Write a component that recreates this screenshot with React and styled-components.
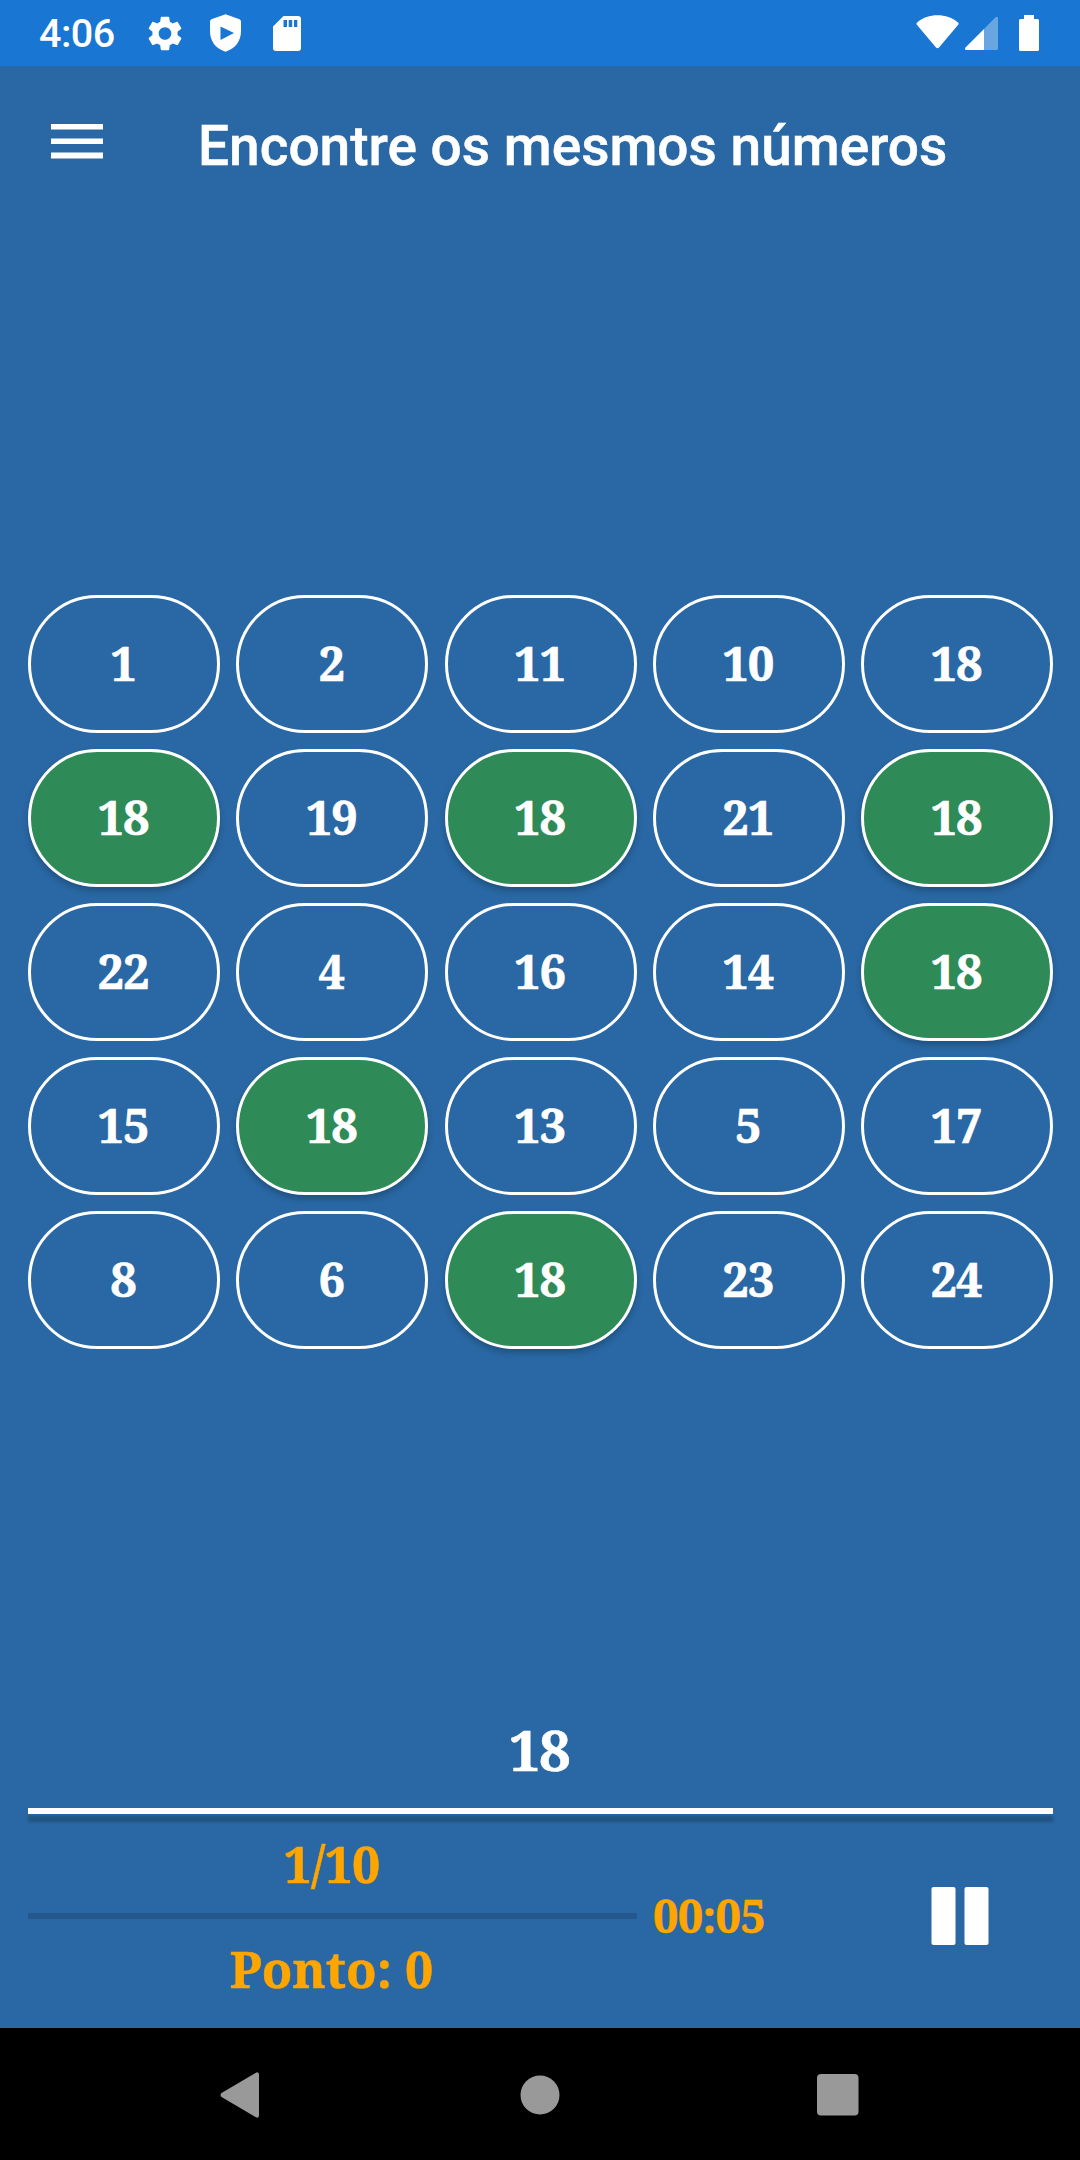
import React, { useState } from 'react'
import styled, { createGlobalStyle } from 'styled-components';

const GlobalStyle = createGlobalStyle`
  * {
    box-sizing: border-box;
  }

  body {
    margin: 0;
    background: #2968a4;
  }

  button {
    margin: 0;
    padding: 0;
    border: none;
    background: none;
    cursor: pointer;
  }

  svg {
    display: block;
  }
`;

const Screen = styled.div`
  display: flex;
  flex-direction: column;
  width: 1080px;
  height: 2160px;
  overflow: hidden;
  color: #fff;
  background: #2968a4;
  font-family: Roboto, sans-serif;
`;

const StatusBar = styled.div`
  display: flex;
  align-items: center;
  justify-content: space-between;
  height: 66px;
  padding: 0 41px 0 39px;
  background: #1976d2;
`;

const StatusGroup = styled.div`
  display: flex;
  align-items: center;
`;

const Clock = styled.span`
  width: 104.5px;
  font-size: 39.5px;
  font-weight: 500;
  letter-spacing: -0.5px;
  line-height: 66px;
  padding-top: 2px;
`;

const Header = styled.header`
  display: flex;
  align-items: flex-start;
  height: 529px;
  padding: 58px 0 0 51px;
`;

const MenuButton = styled.button`
  width: 52px;
  height: 36px;
  margin-right: 95px;
`;

const Title = styled.h1`
  margin: -10px 0 0;
  font-size: 55px;
  font-weight: 500;
  line-height: 64px;
  white-space: nowrap;
  -webkit-text-stroke: 0.5px #fff;
`;

const Board = styled.main`
  display: grid;
  grid-template-columns: repeat(5, 192px);
  grid-auto-rows: 138px;
  justify-content: space-between;
  row-gap: 16px;
  padding: 0 27px 0 28px;
`;

const Tile = styled.button`
  padding: 0 2px 2px 0;
  border: 3px solid #fff;
  border-radius: 69px;
  color: #fff;
  font-family: "Noto Serif", "DejaVu Serif Condensed", "DejaVu Serif", serif;
  font-size: 47px;
  font-weight: bold;
  letter-spacing: -1.1px;
  -webkit-text-stroke: 0.6px #fff;
  background: ${(props) => props.$found ? '#2e8b57' : 'transparent'};
  box-shadow: ${(props) => props.$found ? '0 4px 6px rgba(0, 0, 0, 0.22)' : 'none'};
`;

const Target = styled.div`
  display: flex;
  align-items: flex-end;
  justify-content: center;
  height: 459px;
  padding: 0 2px 24px 0;
  font-family: "Noto Serif", "DejaVu Serif Condensed", "DejaVu Serif", serif;
  font-size: 56px;
  font-weight: bold;
  letter-spacing: -1.5px;
  line-height: 70px;
  -webkit-text-stroke: 0.6px #fff;
`;

const Divider = styled.div`
  height: 6px;
  margin: 0 27px 0 28px;
  background: #fff;
  box-shadow: 0 8px 3px 0 #20547f;
`;

const Footer = styled.footer`
  display: flex;
  align-items: center;
  height: 214px;
  padding: 0 91px 10px 28px;
  color: #ffa500;
  font-family: "Noto Serif", "DejaVu Serif Condensed", "DejaVu Serif", serif;
  font-weight: bold;
  -webkit-text-stroke: 0.5px #ffa500;
`;

const Progress = styled.div`
  display: flex;
  flex-direction: column;
  align-items: center;
  width: 609px;
`;

const Label = styled.span`
  height: 99px;
  padding-right: 2px;
  font-size: 50px;
  letter-spacing: ${(props) => props.$tight ? '-0.8px' : 'normal'};
  line-height: 101px;
`;

const Track = styled.div`
  width: 100%;
  height: 6px;
  background: #24588c;
`;

const Timer = styled.span`
  margin-left: 16px;
  padding-bottom: 2px;
  font-size: 45px;
  letter-spacing: -0.7px;
`;

const PauseButton = styled.button`
  width: 58px;
  height: 58px;
  margin-left: auto;
`;

const NavBar = styled.nav`
  display: flex;
  align-items: center;
  justify-content: space-between;
  height: 132px;
  padding: 2px 221px 0 220px;
  background: #000;
`;

const HomeIcon = styled.svg`
  margin-left: 4px;
`;

const StatusIcon = styled.svg`
  margin-left: ${(props) => props.$gap}px;
`;

const numbers = [
  1, 2, 11, 10, 18,
  18, 19, 18, 21, 18,
  22, 4, 16, 14, 18,
  15, 18, 13, 5, 17,
  8, 6, 18, 23, 24,
]

const target = 18

const GearIcon = () => (
  <StatusIcon width="42" height="42" viewBox="0 -0.25 24 24" fill="#fff" $gap={0}>
    <path d="M19.14 12.94c.04-.3.06-.61.06-.94 0-.32-.02-.64-.07-.94l2.03-1.58c.18-.14.23-.41.12-.61l-1.92-3.32c-.12-.22-.37-.29-.59-.22l-2.39.96c-.5-.38-1.03-.7-1.62-.94l-.36-2.54c-.04-.24-.24-.41-.48-.41h-3.84c-.24 0-.43.17-.47.41l-.36 2.54c-.59.24-1.13.57-1.62.94l-2.39-.96c-.22-.08-.47 0-.59.22L2.74 8.87c-.12.21-.08.47.12.61l2.03 1.58c-.05.3-.09.63-.09.94s.02.64.07.94l-2.03 1.58c-.18.14-.23.41-.12.61l1.92 3.32c.12.22.37.29.59.22l2.39-.96c.5.38 1.03.7 1.62.94l.36 2.54c.05.24.24.41.48.41h3.84c.24 0 .44-.17.47-.41l.36-2.54c.59-.24 1.13-.56 1.62-.94l2.39.96c.22.08.47 0 .59-.22l1.92-3.32c.12-.22.07-.47-.12-.61l-2.01-1.58zM12 15.6c-1.98 0-3.6-1.62-3.6-3.6s1.62-3.6 3.6-3.6 3.6 1.62 3.6 3.6-1.62 3.6-3.6 3.6z" />
  </StatusIcon>
)

const ShieldIcon = () => (
  <StatusIcon width="31" height="38" viewBox="0 0 31 38" fill="#fff" $gap={24}>
    <path fillRule="evenodd" d="M15.5.3 29.6 5.3Q31 6 31 7.5V17C31 27 25.5 34.5 15.5 37.7 5.5 34.5 0 27 0 17V7.5Q0 6 1.4 5.3ZM10.5 12.5V26L24 19Z" />
  </StatusIcon>
)

const SdCardIcon = () => (
  <StatusIcon width="28" height="35" viewBox="0 0 28 35" fill="#fff" $gap={32}>
    <path fillRule="evenodd" d="M10.5 0H25Q28 0 28 3V32Q28 35 25 35H3Q0 35 0 32V10.5ZM10.5 4V11H14V4ZM15.7 4V11H19.2V4ZM21 4V11H24.3V4Z" />
  </StatusIcon>
)

// wifi, signal and battery share one drawing
const SignalIcons = () => (
  <svg width="123" height="38" viewBox="916 14 123 38" fill="#fff">
    <path d="M917.2 22.5C928 12.8 947 12.8 958 22.5Q959.2 23.5 958 25L939 47.5Q937.5 48.8 936 47.5L917 25Q915.9 23.5 917.2 22.5Z" />
    <path d="M998 18V48.5Q998 50 996.5 50H984V29L995.5 17.3Q997.5 16 998 18Z" fillOpacity="0.35" />
    <path d="M984 29V50H966.5Q964 49.5 965.5 47.5Z" />
    <path d="M1024 15H1034V19H1037.5Q1039 19 1039 20.5V49.5Q1039 51 1037.5 51H1020.5Q1019 51 1019 49.5V20.5Q1019 19 1020.5 19H1024Z" />
  </svg>
)

export default function App() {
  // positions already tapped by the player
  const [found, setFound] = useState([5, 7, 9, 14, 16, 22])

  const onTap = (index) => {
    if (numbers[index] === target && !found.includes(index)) {
      setFound([...found, index])
    }
  }

  return (
    <>
      <GlobalStyle />
      <Screen>
        <StatusBar>
          <StatusGroup>
            <Clock>4:06</Clock>
            <GearIcon />
            <ShieldIcon />
            <SdCardIcon />
          </StatusGroup>
          <SignalIcons />
        </StatusBar>
        <Header>
          <MenuButton aria-label="Menu">
            <svg width="52" height="36" fill="#fff">
              <path d="M0 0H52V5.5H0ZM0 14.5H52V20H0ZM0 28.5H52V34.5H0Z" />
            </svg>
          </MenuButton>
          <Title>Encontre os mesmos números</Title>
        </Header>
        <Board>
          {numbers.map((number, index) => (
            <Tile key={index} $found={found.includes(index)} onClick={() => onTap(index)}>
              {number}
            </Tile>
          ))}
        </Board>
        <Target>{target}</Target>
        <Divider />
        <Footer>
          <Progress>
            <Label $tight>1/10</Label>
            <Track />
            <Label>Ponto: 0</Label>
          </Progress>
          <Timer>00:05</Timer>
          <PauseButton aria-label="Pause">
            <svg width="58" height="58" fill="#fff">
              <rect x="0.5" width="24" height="58" rx="2" />
              <rect x="33.5" width="24" height="58" rx="2" />
            </svg>
          </PauseButton>
        </Footer>
        <NavBar>
          <svg width="39" height="46" fill="#999">
            <path d="M35.5 1Q39 -1 39 3V43Q39 47 35.5 45L1.5 25Q-0.5 23 1.5 21Z" />
          </svg>
          <HomeIcon width="40" height="40" fill="#999">
            <circle cx="20" cy="20" r="19.5" />
          </HomeIcon>
          <svg width="42" height="42" fill="#999">
            <rect width="41.5" height="41.5" rx="4" />
          </svg>
        </NavBar>
      </Screen>
    </>
  )
}
